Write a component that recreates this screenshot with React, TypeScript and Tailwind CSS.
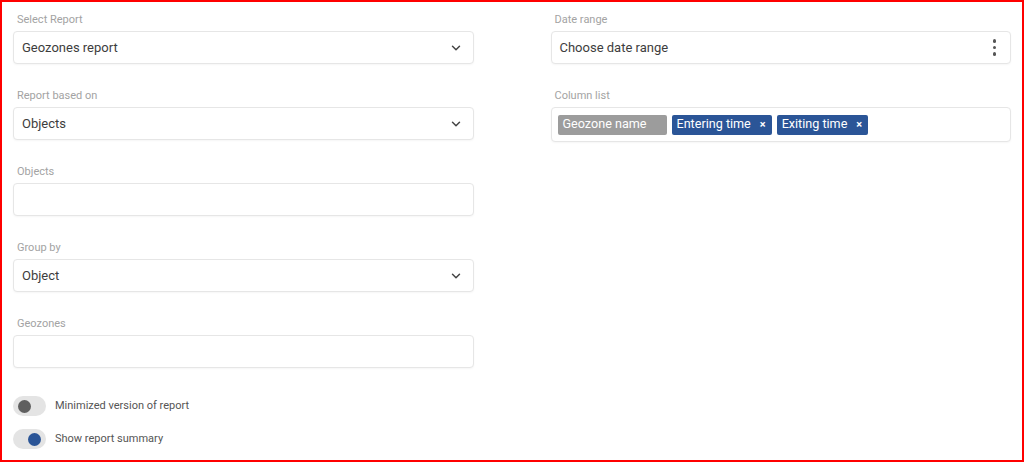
import { ChevronDown } from "lucide-react";

const labelClass = "h-4 px-[4px] text-[11px] leading-4 text-[#a3a3a3]";
const boxClass =
  "mt-[3px] flex h-[33px] items-center rounded-[4px] border border-[#e6e6e6] bg-white pl-[8px] pr-[10px] text-[13px] text-[#3d3d3d] shadow-[0_1px_2px_rgba(0,0,0,0.04)]";

function SelectField({ label, value }: { label: string; value?: string }) {
  return (
    <div>
      <div className={labelClass}>{label}</div>
      <div className={boxClass}>
        <span className="flex-1">{value}</span>
        {value ? (
          <ChevronDown className="h-[14px] w-[14px] text-[#444]" strokeWidth={2.5} />
        ) : null}
      </div>
    </div>
  );
}

function Chip({ text, gray }: { text: string; gray?: boolean }) {
  return (
    <span
      className={`flex h-5 items-center whitespace-nowrap rounded-[2px] pl-[5px] text-[12.6px] text-white ${
        gray ? "w-[109px] bg-[#9c9c9c]" : "bg-[#2b5597]"
      }`}
    >
      {text}
      <span
        className={`ml-[9px] mr-[6px] text-[11px] font-bold leading-none ${
          gray ? "invisible" : ""
        }`}
      >
        ×
      </span>
    </span>
  );
}

function Toggle({ label, on }: { label: string; on?: boolean }) {
  return (
    <div className="flex items-center">
      <div
        className={`flex h-5 w-[33px] items-center rounded-full bg-[#e4e4e4] px-[5px] ${
          on ? "justify-end" : "justify-start"
        }`}
      >
        <span
          className={`h-[13px] w-[13px] rounded-full ${
            on ? "bg-[#2b5597]" : "bg-[#5f5f5f]"
          }`}
        />
      </div>
      <span className="ml-[9px] text-[11px] text-[#555]">{label}</span>
    </div>
  );
}

export default function App() {
  return (
    <div
      className="h-[462px] w-[1024px] overflow-hidden border-2 border-[#ff0000] bg-white"
      style={{ fontFamily: "Roboto, 'Noto Sans', sans-serif" }}
    >
      <div className="flex gap-[77px] px-[11px] pt-[10px]">
        <div className="flex w-[461px] flex-col">
          <div className="flex flex-col gap-6">
            <SelectField label="Select Report" value="Geozones report" />
            <SelectField label="Report based on" value="Objects" />
            <SelectField label="Objects" />
            <SelectField label="Group by" value="Object" />
            <SelectField label="Geozones" />
          </div>
          <div className="mt-[28px] flex flex-col gap-[13px]">
            <Toggle label="Minimized version of report" />
            <Toggle label="Show report summary" on />
          </div>
        </div>

        <div className="flex w-[461px] flex-col gap-6">
          <div>
            <div className={labelClass}>Date range</div>
            <div className={boxClass}>
              <span className="flex-1">Choose date range</span>
              <span className="flex flex-col gap-[3px] pr-[4px]">
                <span className="h-[3.5px] w-[3.5px] rounded-full bg-[#555]" />
                <span className="h-[3.5px] w-[3.5px] rounded-full bg-[#555]" />
                <span className="h-[3.5px] w-[3.5px] rounded-full bg-[#555]" />
              </span>
            </div>
          </div>
          <div>
            <div className={labelClass}>Column list</div>
            <div className="mt-[3px] flex h-[35px] items-center gap-[5px] rounded-[4px] border border-[#e6e6e6] bg-white pl-[6px] shadow-[0_1px_2px_rgba(0,0,0,0.04)]">
              <Chip text="Geozone name" gray />
              <Chip text="Entering time" />
              <Chip text="Exiting time" />
            </div>
          </div>
        </div>
      </div>
    </div>
  );
}
